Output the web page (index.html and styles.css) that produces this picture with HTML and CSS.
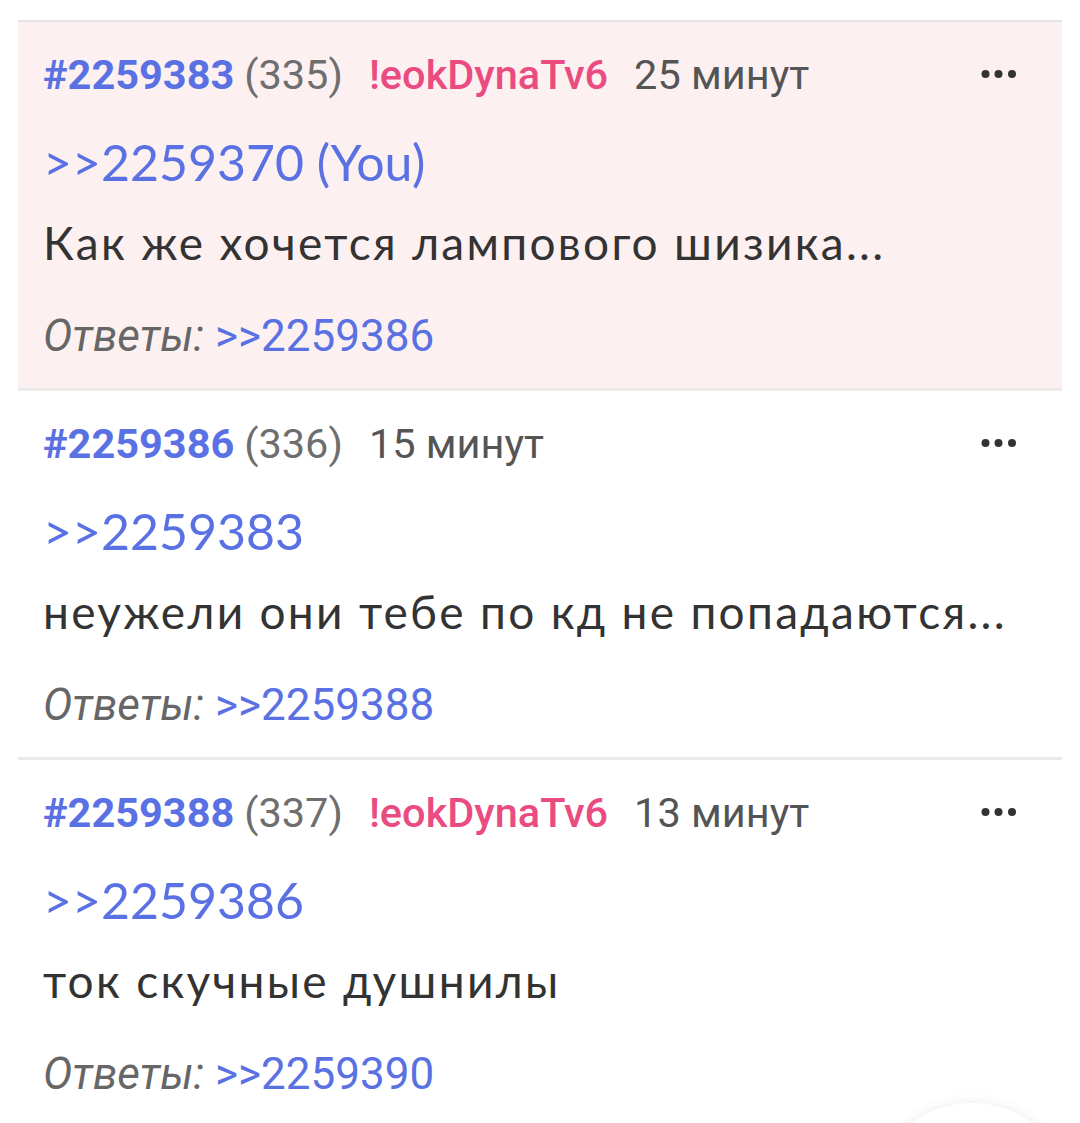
FILE: index.html
```html
<!DOCTYPE html>
<html lang="ru">
<head>
  <meta charset="UTF-8" />
  <meta name="viewport" content="width=device-width, initial-scale=1.0"/>
  <title>Тред</title>
  <link rel="stylesheet" href="styles.css">
</head>
<body>
  <div class="thread">
    <!-- post 335 -->
    <div class="post post-mine">
      <div class="post-head">
        <span class="post-num">#2259383</span>
        <span class="post-idx">(335)</span>
        <span class="post-trip">!eokDynaTv6</span>
        <span class="post-time">25 минут</span>
        <svg class="post-menu" width="36" height="10" viewBox="0 0 36 10">
          <circle cx="4.5" cy="5" r="4" />
          <circle cx="17.5" cy="5" r="4" />
          <circle cx="31" cy="5" r="4" />
        </svg>
      </div>
      <div class="post-link">&gt;&gt;2259370 (You)</div>
      <div class="post-text">Как же хочется лампового шизика...</div>
      <div class="post-replies"><em>Ответы:</em> <a href="#">&gt;&gt;2259386</a></div>
    </div>

    <!-- post 336 -->
    <div class="post">
      <div class="post-head">
        <span class="post-num">#2259386</span>
        <span class="post-idx">(336)</span>
        <span class="post-time">15 минут</span>
        <svg class="post-menu" width="36" height="10" viewBox="0 0 36 10">
          <circle cx="4.5" cy="5" r="4" />
          <circle cx="17.5" cy="5" r="4" />
          <circle cx="31" cy="5" r="4" />
        </svg>
      </div>
      <div class="post-link">&gt;&gt;2259383</div>
      <div class="post-text">неужели они тебе по кд не попадаются...</div>
      <div class="post-replies"><em>Ответы:</em> <a href="#">&gt;&gt;2259388</a></div>
    </div>

    <!-- post 337 -->
    <div class="post">
      <div class="post-head">
        <span class="post-num">#2259388</span>
        <span class="post-idx">(337)</span>
        <span class="post-trip">!eokDynaTv6</span>
        <span class="post-time">13 минут</span>
        <svg class="post-menu" width="36" height="10" viewBox="0 0 36 10">
          <circle cx="4.5" cy="5" r="4" />
          <circle cx="17.5" cy="5" r="4" />
          <circle cx="31" cy="5" r="4" />
        </svg>
      </div>
      <div class="post-link">&gt;&gt;2259386</div>
      <div class="post-text">ток скучные душнилы</div>
      <div class="post-replies"><em>Ответы:</em> <a href="#">&gt;&gt;2259390</a></div>
    </div>
  </div>

  <div class="fab"></div>
</body>
</html>
```

FILE: styles.css
```css
body {
  margin: 0;
  background: #fff;
  font-family: Roboto, 'Liberation Sans', sans-serif;
  color: #333;
  overflow: hidden;
}
.thread {
  margin: 20px 18px 0 18px;
  border-top: 2px solid #e8e4e4;
}
.post {
  padding: 24px 26px 24px 25px;
  border-bottom: 3px solid #ebebeb;
  background: #fff;
}
.post-mine {
  background: #fdf0f1;
}
.post-head {
  display: flex;
  align-items: center;
  height: 56px;
  font-size: 41.5px;
  white-space: nowrap;
}
.post-num {
  color: #5a71e4;
  font-weight: 700;
}
.post-idx {
  color: #6e6e6e;
  margin-left: 10px;
}
.post-trip {
  color: #ea4b80;
  font-weight: 500;
  margin-left: 26px;
}
.post-time {
  color: #555;
  margin-left: 26px;
}
.post-menu {
  margin-left: auto;
  margin-right: 19px;
  fill: #333;
}
.post-link {
  margin-top: 20px;
  line-height: 80px;
  font-family: Lato, 'Open Sans', sans-serif;
  font-size: 50px;
  color: #5a71e4;
}
.post-text {
  line-height: 82px;
  font-family: Lato, 'Open Sans', sans-serif;
  font-size: 46px;
  letter-spacing: 2.3px;
  color: #333;
}
.post-replies {
  margin-top: 24px;
  line-height: 56px;
  font-size: 44px;
}
.post-replies em {
  color: #666;
}
.post-replies a {
  color: #5a71e4;
  text-decoration: none;
}
.fab {
  position: fixed;
  left: 872px;
  top: 1103px;
  width: 200px;
  height: 200px;
  border-radius: 50%;
  background: #fff;
  box-shadow: 0 0 14px rgba(0,0,0,0.08);
}
```
